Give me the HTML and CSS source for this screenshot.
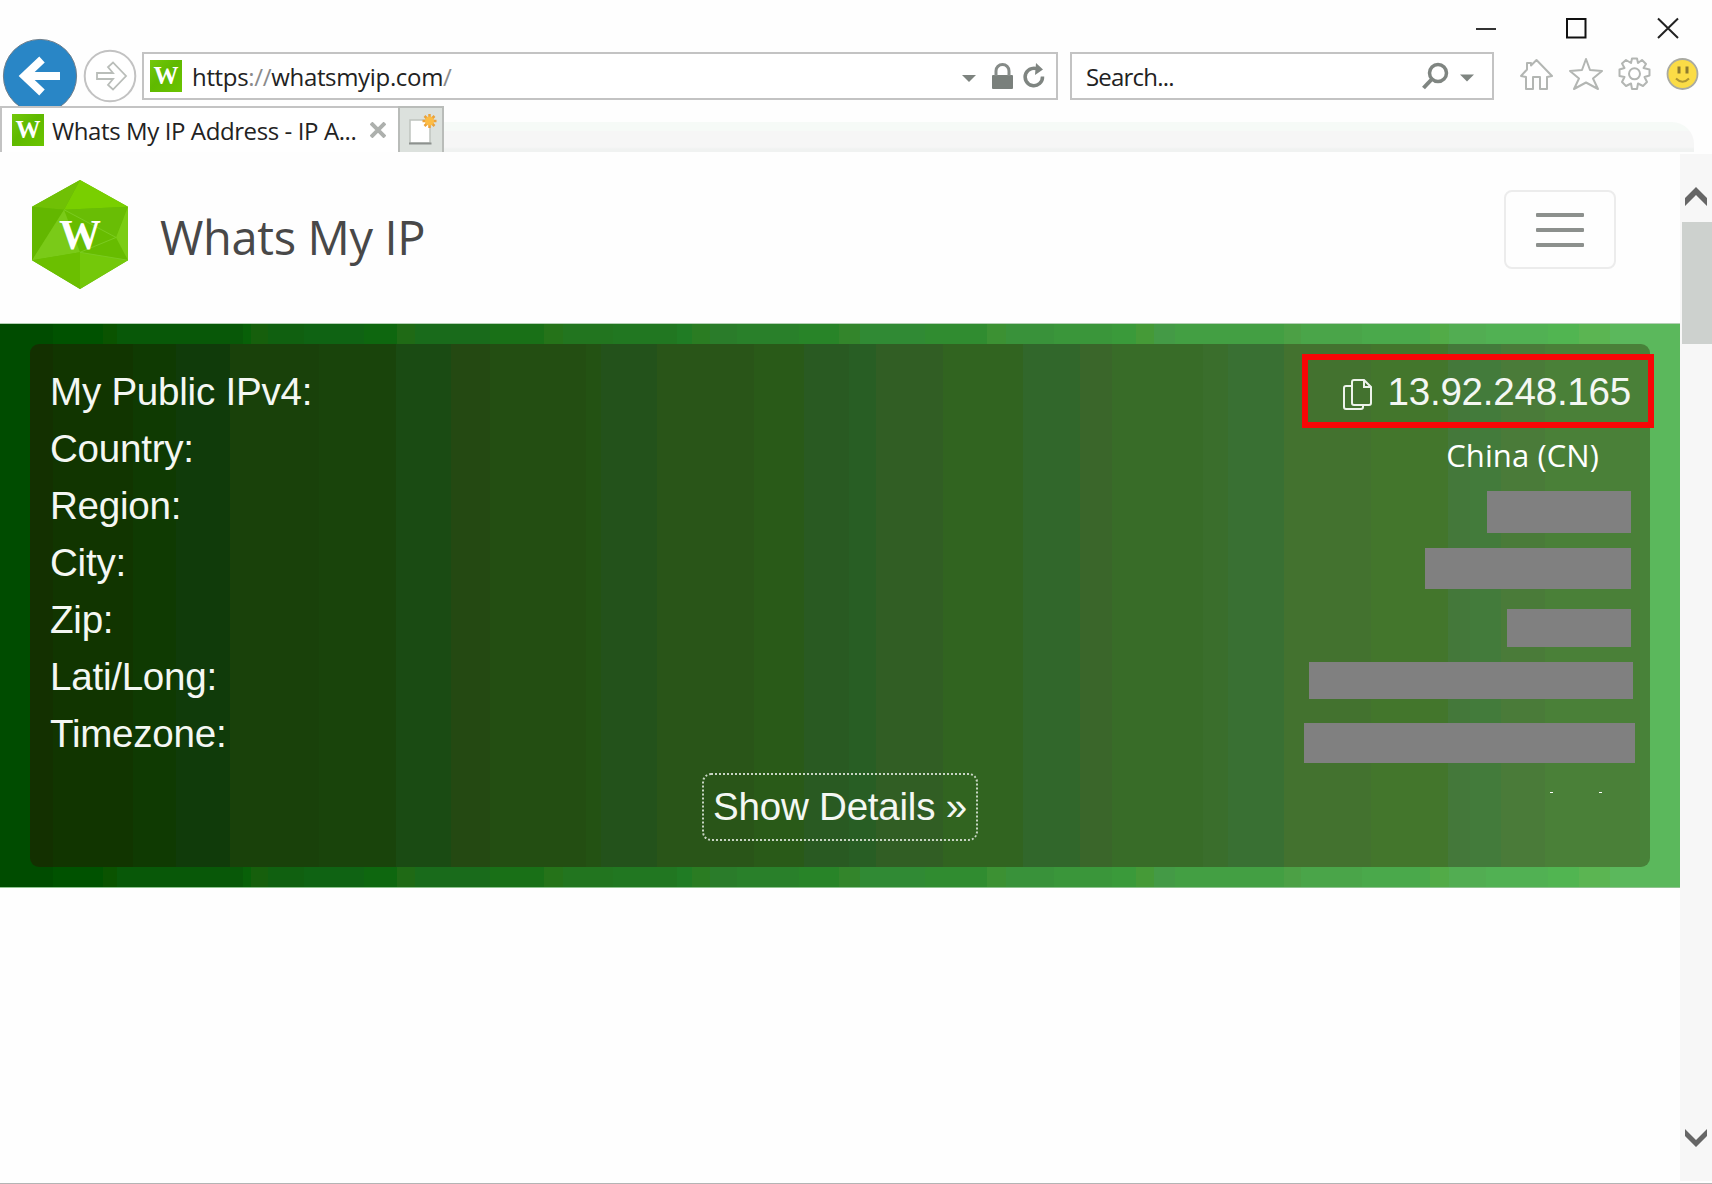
FILE: index.html
```html
<!DOCTYPE html>
<html lang="en">
<head>
<meta charset="utf-8">
<title>Whats My IP Address</title>
<link rel="stylesheet" href="styles.css">
</head>
<body>
<div class="window">
  <header class="chrome">
    <svg class="nav" width="142" height="106" viewBox="0 0 142 106">
      <circle cx="40" cy="76" r="36.6" fill="#2986c6" stroke="#6f7f8c" stroke-width="1"/>
      <path d="M60 76H24M42 59.500L24.500 76L42 92.500" fill="none" stroke="#fff" stroke-width="8"/>
      <circle cx="110" cy="76" r="25.300" fill="#fff" stroke="#c2c2c2" stroke-width="2"/>
      <path d="M97 73H113L108 67L113 62.500L126 76L113 89.500L108 85L113 79H97Z" fill="#fff" stroke="#b9bdb9" stroke-width="1.800"/>
    </svg>
    <div class="chrome-main">
      <div class="controls">
        <svg width="206" height="22" viewBox="0 0 206 22">
          <path d="M0 12H20" stroke="#333" stroke-width="2"/>
          <rect x="91" y="2" width="18.500" height="18.500" fill="none" stroke="#111" stroke-width="2"/>
          <path d="M182 1.500L202 21M202 1.500L182 21" stroke="#222" stroke-width="2"/>
        </svg>
      </div>
      <div class="bars">
        <div class="box address">
          <span class="favicon">W</span>
          <span class="url">https<i>://</i>whatsmyip.com<i>/</i></span>
          <svg class="address-icons" width="88" height="44" viewBox="0 0 88 44">
            <path d="M1 21H15L8 28Z" fill="#7d837f"/>
            <rect x="31" y="21" width="21" height="14" rx="1" fill="#7a807c"/>
            <path d="M35 22V17A6.500 6.500 0 0 1 48 17V22" fill="none" stroke="#868b88" stroke-width="3"/>
            <path d="M78 16A8.700 8.700 0 1 0 81.500 22.500" fill="none" stroke="#7f8581" stroke-width="3.500"/>
            <path d="M75 9L82 15.500L74 21Z" fill="#7f8581"/>
          </svg>
        </div>
        <div class="box search">
          <span class="search-text">Search...</span>
          <svg width="56" height="44" viewBox="0 0 56 44">
            <circle cx="17" cy="19" r="8.500" fill="none" stroke="#7f8581" stroke-width="3.500"/>
            <path d="M11 25L2.500 34" stroke="#7f8581" stroke-width="4"/>
            <path d="M39 20.500H53L46 27.500Z" fill="#7f8581"/>
          </svg>
        </div>
        <svg class="tools" width="182" height="36" viewBox="0 0 182 36">
          <g fill="#fff" stroke="#b3b6b3" stroke-width="2" stroke-linejoin="round">
            <path d="M2 19L8 12.500V6H12V8.500L17.500 3L33 19L28 20V32H21V20H14V32H7V20Z"/>
            <path d="M67 2L71 13L83 14L74 21.500L79 32L67 25.500L55 32L60 21.500L51 14L63 13Z"/>
            <path d="M113 1.500H118L119 6L123 3L127 7L124.500 11L130.500 12.500V18.500L125.500 20L128 25L124 29L119 26.500L118 32H113L112 26.500L107 29L103 25L105.500 20L100.500 19V12.500L105.500 11L103 6.500L107 3L112 6Z"/>
            <circle cx="115.500" cy="16.800" r="5.500"/>
          </g>
          <circle cx="163.500" cy="17" r="15" fill="#fbdc46" stroke="#a9aaa2" stroke-width="1.800"/>
          <path d="M160 9.500V16.500M168 9.500V16.500" stroke="#8d7a2e" stroke-width="3"/>
          <path d="M157 21.500Q163.500 28 170 21.500" fill="none" stroke="#ad9432" stroke-width="2"/>
        </svg>
      </div>
    </div>
  </header>
  <div class="tabs">
    <div class="tab">
      <span class="favicon">W</span>
      <span class="tab-title">Whats My IP Address - IP A...</span>
      <svg width="16" height="16" viewBox="0 0 16 16"><path d="M1 1L15 15M15 1L1 15" stroke="#adb0ad" stroke-width="4"/></svg>
    </div>
    <div class="new-tab">
      <svg width="43" height="44" viewBox="0 0 43 44">
        <path d="M10 12H30V35H10Z" fill="#fff" stroke="#bfc3bf" stroke-width="1.500"/>
        <path d="M9 35.500H31.500" stroke="#8d918e" stroke-width="2"/>
        <path d="M29.500 6V20M22.500 13H36.500M24.500 8L34.500 18M34.500 8L24.500 18" stroke="#eba23a" stroke-width="2.500"/>
        <circle cx="29.500" cy="13" r="4.500" fill="#fcbc45"/>
      </svg>
    </div>
    <div class="strip"></div>
  </div>
  <div class="viewport">
    <main class="page">
      <div class="site-header">
        <svg class="logo" width="96" height="109" viewBox="0 0 96 110" preserveAspectRatio="none">
          <path d="M48 0L96 27V81L48 110L0 81V27Z" fill="#67bc00"/>
          <path d="M48 0L96 27L32 30Z" fill="#79cf00"/>
          <path d="M48 0L32 30L0 27Z" fill="#70c005"/>
          <path d="M0 27L32 30L0 81Z" fill="#63b700"/>
          <path d="M32 30L48 73L0 81Z" fill="#7aca18"/>
          <path d="M32 30L84 58L96 27Z" fill="#69bd05"/>
          <path d="M96 27V81L84 58Z" fill="#7bcd14"/>
          <path d="M0 81L48 73V110Z" fill="#6bbf00"/>
          <path d="M48 73L96 81L48 110Z" fill="#74c80a"/>
          <path d="M32 30L84 58L48 73L96 81" fill="none" stroke="#7bcb20"/>
          <text x="48" y="69.500" text-anchor="middle" class="logo-letter">W</text>
        </svg>
        <h1>Whats My IP</h1>
        <button class="menu" aria-label="Menu"><span></span><span></span><span></span></button>
      </div>
      <section class="hero">
        <div class="card">
          <div class="details">
            <div class="labels">
              <span>My Public IPv4:</span><span>Country:</span><span>Region:</span><span>City:</span><span>Zip:</span><span>Lati/Long:</span><span>Timezone:</span>
            </div>
            <div class="values">
              <div class="ip">
                <svg width="30" height="32" viewBox="0 0 30 32" fill="none" stroke="#edf3eb" stroke-width="2">
                  <path d="M9 3Q9 1 11 1H21L28 8V24Q28 26 26 26H11Q9 26 9 24ZM21 1V8H28"/>
                  <path d="M9 7H3Q1 7 1 9V28Q1 30 3 30H18Q20 30 20 28V26"/>
                </svg>
                <span>13.92.248.165</span>
              </div>
              <div class="country">China (CN)</div>
              <div class="mask region"></div>
              <div class="mask city"></div>
              <div class="mask zip"></div>
              <div class="mask latlong"></div>
              <div class="mask timezone"></div>
              <div class="specks"><i></i><i></i></div>
            </div>
          </div>
          <button class="more">Show Details »</button>
          <div class="highlight"></div>
        </div>
      </section>
    </main>
    <div class="scrollbar">
      <svg width="24" height="20" viewBox="0 0 24 20"><path d="M1 11L12 0L23 11V19L12 8L1 19Z" fill="#666"/></svg>
      <div class="thumb"></div>
      <svg class="down" width="24" height="20" viewBox="0 0 24 20"><path d="M1 1L12 12L23 1V8L12 19L1 8Z" fill="#666"/></svg>
    </div>
  </div>
</div>
</body>
</html>
```
FILE: styles.css
```css
* { box-sizing: border-box; }
body { margin: 0; background: #fff; font-family: "Open Sans", "Noto Sans", sans-serif; }
svg { display: block; flex: none; }
button { margin: 0; padding: 0; background: none; font: inherit; color: inherit; letter-spacing: inherit; }

.window { width: 1712px; height: 1184px; display: flex; flex-direction: column; overflow: hidden; border-bottom: 1px solid #b4b4b4; background: #fefefe; }
.chrome { height: 106px; display: flex; flex: none; }
.chrome-main { flex: 1; }
.controls { height: 52px; padding: 17px 30px 0 0; display: flex; justify-content: flex-end; }
.bars { display: flex; height: 48px; }
.box { border: 2px solid #c3c3c3; display: flex; align-items: center; background: #fff; }
.address { width: 916px; padding-left: 6px; margin-right: 12px; }
.search { width: 424px; justify-content: space-between; padding: 0 15px 0 14px; margin-right: 25px; }
.tools { margin-top: 5px; }
.favicon { width: 32px; height: 32px; flex: none; background: linear-gradient(135deg, #74c80a, #5fb900 45%, #6bc400); color: #fff; font: bold 25px/31px "Liberation Serif", serif; text-align: center; }
.url, .search-text, .tab-title { color: #222; font-size: 24px; line-height: 32px; padding-top: 2px; white-space: nowrap; }
.url { margin-left: 10px; letter-spacing: -0.33px; }
.url i { font-style: normal; color: #8b8b8b; }
.address-icons { margin-left: auto; margin-right: 7px; }
.search-text { letter-spacing: -0.8px; }

.tabs { height: 46px; display: flex; flex: none; }
.tab { width: 398px; border: solid #c3c3c3; border-width: 2px 0 0 2px; display: flex; align-items: center; padding-left: 10px; background: #fff; }
.tab .tab-title { width: 307px; margin: 0 11px 0 8px; letter-spacing: -0.4px; }
.new-tab { width: 46px; border: solid #b9bcb9; border-width: 2px 2px 0; background: #dce1dd; }
.strip { width: 1250px; height: 30px; margin-top: 16px; border-top-right-radius: 22px; background: linear-gradient(#f6faf7 9px, #f6f6f6 9px, #f6f6f6 25px, #f0f2f1 27px); }

.viewport { flex: 1; display: flex; min-height: 0; }
.page { width: 1680px; }
.site-header { height: 171px; display: flex; align-items: flex-start; padding: 28px 64px 0 32px; }
h1 { margin: 25px 0 0 32px; font-size: 47px; line-height: 64px; font-weight: 400; color: #484848; letter-spacing: -0.35px; white-space: nowrap; }
.logo-letter { font: bold 42px "Liberation Serif", serif; fill: #fff; }
.menu { width: 112px; height: 79px; margin: 10px 0 0 auto; border: 2px solid #ececec; border-radius: 8px; display: flex; flex-direction: column; align-items: center; justify-content: center; gap: 11px; }
.menu span { width: 48px; height: 4px; border-radius: 1px; background: #8c908d; }

.hero { height: 565px; padding: 20px 30px; border-top: 1px solid #b4d0b4; border-bottom: 1px solid #8fc48f; background: linear-gradient(90deg, #004c00 53px, #005200 53px 103px, #0a5300 103px 117px, #085808 117px 243px, #086008 243px 251px, #165f0c 251px 268px, #106010 268px 304px, #0f6313 304px 364px, #0e670f 364px 397px, #1f6a15 397px 415px, #196b1b 415px 490px, #197017 490px 544px, #257319 544px 563px, #22751f 563px 613px, #217721 613px 677px, #207c24 677px 692px, #2a7c22 692px 710px, #2a7c2a 710px 737px, #29802a 737px 799px, #288428 799px 839px, #33852b 839px 860px, #308a34 860px 925px, #308c30 925px 987px, #3c9133 987px 1006px, #39923a 1006px 1054px, #3a963a 1054px 1112px, #3a9a3a 1112px 1136px, #459a37 1136px 1154px, #449a46 1154px 1175px, #439f43 1175px 1284px, #4ca045 1284px 1301px, #4aa549 1301px 1362px, #4aa94b 1362px 1430px, #52ab47 1430px 1449px, #52ad52 1449px 1486px, #51b153 1486px 1548px, #51b551 1548px 1579px, #5bb552 1579px 1610px, #5bb85c 1610px); }
.card { position: relative; height: 523px; border-radius: 9px; padding: 19px 19px 0 20px; color: #f4f7f3; font: 38.6px/57px "Liberation Sans", Arial, sans-serif; letter-spacing: -0.25px; background: linear-gradient(90deg, #133000 23px, #113500 23px 103px, #0f3a02 103px 146px, #103b0a 146px 200px, #19410a 200px 289px, #19440b 289px 366px, #1a4b13 366px 421px, #244912 421px 460px, #234e12 460px 556px, #235213 556px 571px, #23521b 571px 627px, #295518 627px 724px, #295a18 724px 774px, #295a22 774px 819px, #285e24 819px 846px, #315e24 846px 913px, #316420 913px 993px, #31672b 993px 1050px, #3a662a 1050px 1082px, #386c28 1082px 1173px, #3a6e2c 1173px 1198px, #397033 1198px 1254px, #43722f 1254px 1341px, #43762c 1341px 1418px, #44783a 1418px 1440px, #437b3b 1440px 1471px, #4a7b39 1471px 1515px, #4a8038 1515px 1610px, #488239 1610px); }
.details { display: flex; justify-content: space-between; height: 411px; }
.labels, .values { display: flex; flex-direction: column; }
.labels span { height: 57px; flex: none; white-space: nowrap; }
.values { align-items: flex-end; }
.ip { height: 57px; flex: none; display: flex; align-items: flex-start; gap: 15px; }
.ip svg { margin-top: 16px; }
.country { height: 71px; flex: none; margin-right: 32px; color: #fff; font: 31px/70px "Open Sans", "Noto Sans", sans-serif; letter-spacing: 0.1px; white-space: nowrap; }
.mask { background: #808080; flex: none; }
.region { width: 144px; height: 42px; }
.city { width: 206px; height: 41px; margin-top: 15px; }
.zip { width: 124px; height: 38px; margin-top: 20px; }
.latlong { width: 324px; height: 37px; margin: 15px -2px 0 0; }
.timezone { width: 331px; height: 40px; margin: 24px -4px 0 0; }
.specks { display: flex; flex: none; gap: 46px; margin: 29px 29px 0 0; }
.specks i { width: 3px; height: 1px; background: #fff; }
.more { display: block; width: 276px; height: 68px; margin: -1px 0 0 652px; border: 2px dotted #c8d5c4; border-radius: 9px; line-height: 62px; white-space: nowrap; }
.highlight { position: absolute; left: 1272px; top: 10px; width: 352px; height: 74px; border: 6px solid #f80606; }

.scrollbar { width: 32px; margin: 2px 0 2px; background: #f7f7f7; display: flex; flex-direction: column; align-items: center; padding-top: 33px; }
.thumb { width: 30px; height: 122px; margin: 15px 0 0 2px; background: #cdd1ce; }
.down { margin-top: auto; margin-bottom: 33px; }
```
